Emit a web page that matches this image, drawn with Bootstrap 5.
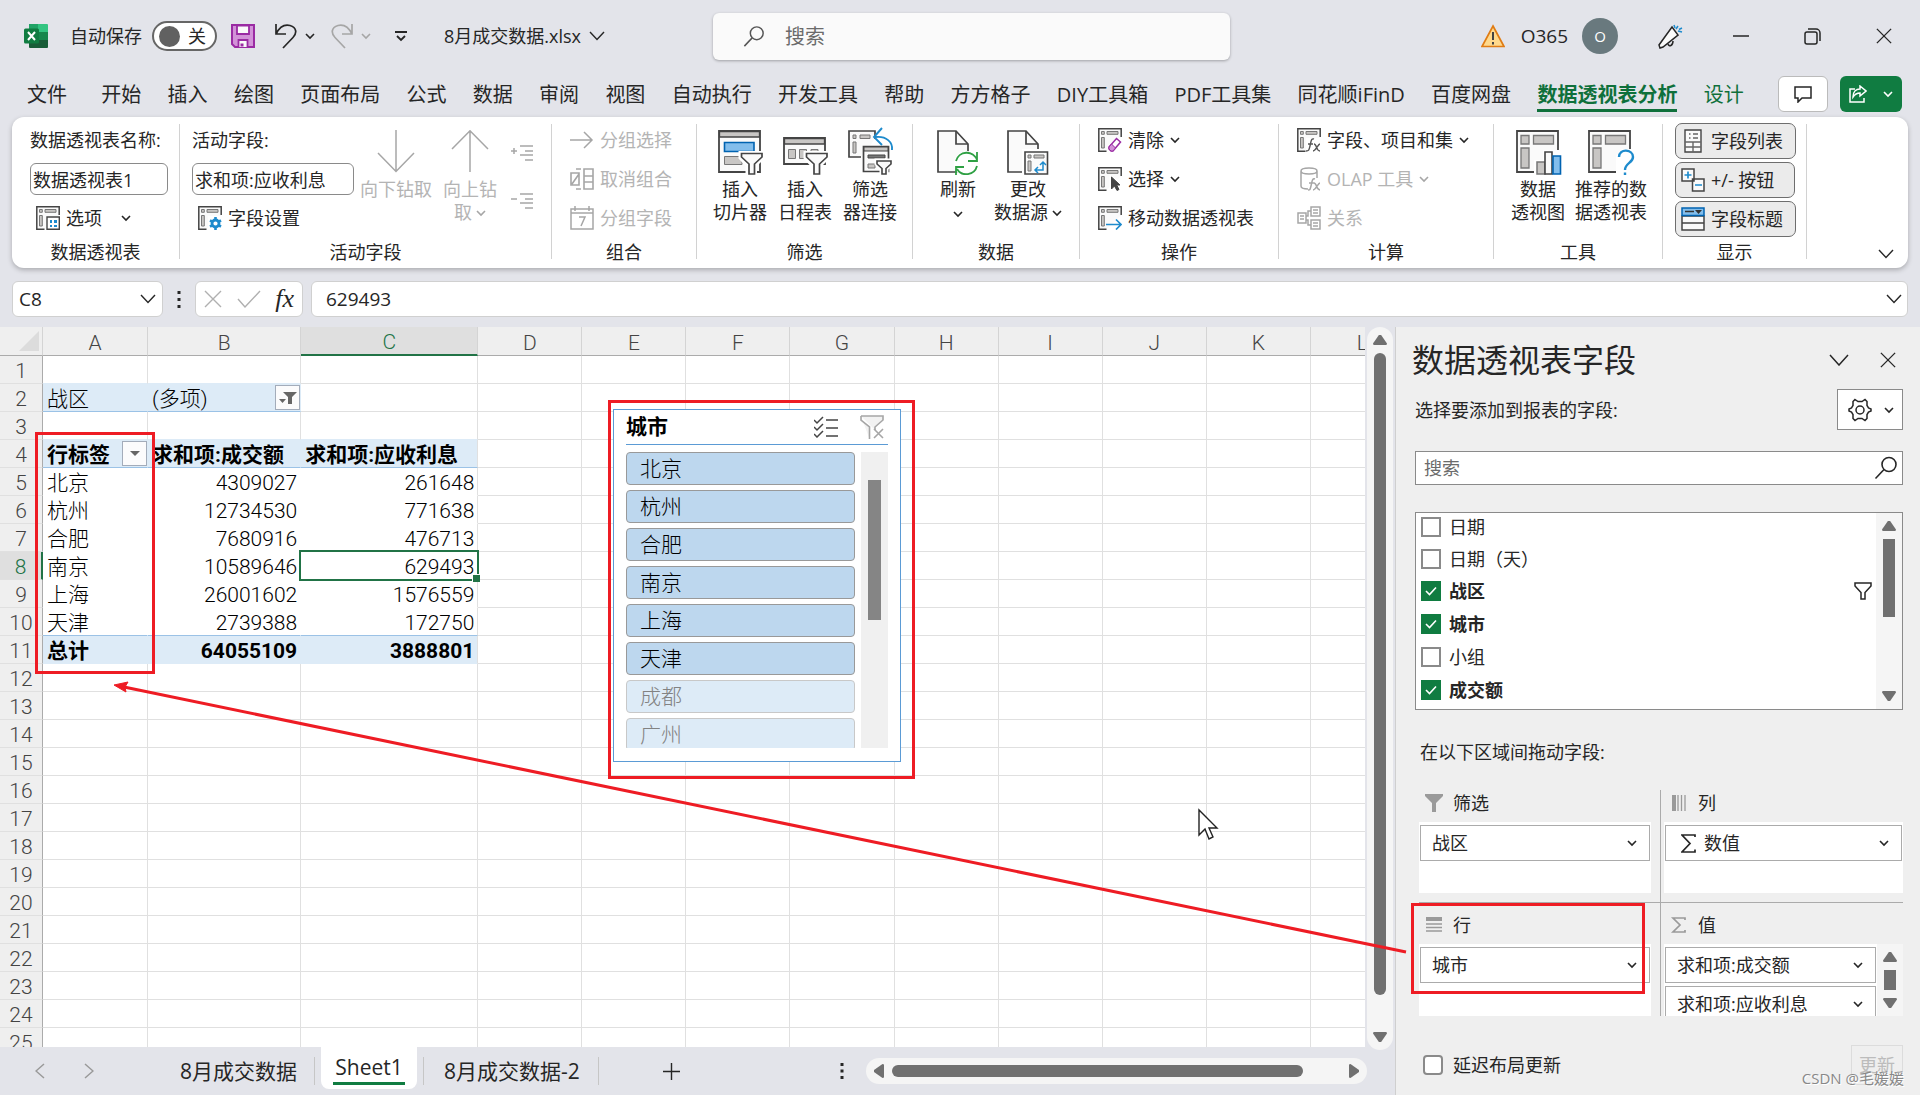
<!DOCTYPE html>
<html lang="zh-CN">
<head>
<meta charset="utf-8">
<meta name="viewport" content="width=device-width, initial-scale=1">
<title>8月成交数据.xlsx</title>
<link href="https://cdn.jsdelivr.net/npm/bootstrap@5.3.0/dist/css/bootstrap.min.css" rel="stylesheet">
<style>
:root{--chrome:#e3e4ea;--ink:#262626;--xl:#107c41;--line:#e0e0e0;--off:#b4b4b4;--red:#ee1c24}
body{font-family:"Open Sans","Noto Sans CJK SC",sans-serif;font-size:18px;line-height:24px;color:var(--ink);background:var(--chrome);height:100vh;overflow:hidden;position:relative}
button,input{font-family:inherit;color:inherit}
svg{display:block;flex:none;fill:none}
svg:not([stroke]){stroke:currentColor}
.bare{background:none;border:0;padding:0;line-height:24px;text-align:left;white-space:nowrap;font-size:18px}
.chev{width:10px;height:10px;stroke-width:1.6}
.chev-l{width:16px;height:10px;stroke-width:1.4}
/* title bar */
.titlebar{height:72px;padding:0 28px 0 24px}
.tb-left{flex:1 1 0}
.tb-right{flex:1 1 0}
.auto-switch{width:65px;height:30px;border:2px solid #666;border-radius:15px;background:#fff;padding:0 9px 0 5px}
.auto-switch i{width:21px;height:21px;border-radius:50%;background:#616161}
.searchbox{width:517px;height:47px;background:#fafafa;border-radius:6px;box-shadow:0 1px 3px #0000004d;padding:0 30px;margin:1px 0 0 27px}
.searchbox input{font-size:20px;background:none;border:0;outline:0;padding:0;flex:1}
.searchbox input::placeholder,.pane-search input::placeholder{color:#6b6b6b;opacity:1}
.avatar{width:36px;height:36px;border-radius:50%;background:#69797e;color:#fff;font-size:15px}
/* tabs */
.menu-tabs{height:45px;padding:0 18px 5px 27px;font-size:20px}
.menu-tabs a{color:var(--ink);text-decoration:none;line-height:28px;white-space:nowrap;border-bottom:3px solid transparent}
.menu-tabs a.on{color:#0f703b;font-weight:700;border-color:#0f703b}
.menu-tabs a.ctx{color:#0f703b}
.cmt{width:50px;height:36px;border:1px solid #bbb;border-radius:6px;background:#fff}
.share{width:62px;height:36px;border:0;border-radius:6px;background:var(--xl);color:#fff}
/* ribbon */
.ribbon{margin:0 12px;height:151px;background:#fff;border-radius:12px;box-shadow:0 2px 5px #00000040}
.grp{margin:7px 0 9px;border-right:1px solid #d2d2d2;display:flex;flex-direction:column;flex:none}
.grp-body{height:121px;display:flex}
.grp-name{line-height:14px;text-align:center;font-size:18px}
.rows3{display:flex;flex-direction:column;gap:7px}
.rows3>*{height:32px;display:flex;align-items:center;white-space:nowrap;gap:6px}
.rows3 input{border:1px solid #8a8a8a;border-radius:6px;padding:0 2px;font-size:18px;background:#fff}
.big{background:none;border:0;padding:6px 0 0;display:flex;flex-direction:column;align-items:center;line-height:23px;font-size:18px;gap:3px;white-space:nowrap}
.off{color:var(--off)}
.off svg{color:#a6a6a6}
.w1{width:168px}.w2{width:372px}.w3{width:145px}.w4{width:216px}.w5{width:167px}.w6{width:199px}.w7{width:215px}.w8{width:169px}.w9{width:144px}
.tog{border:1px solid #6e6e6e;border-radius:7px;background:#ebebeb;height:36px!important;min-width:120px;padding:0 12px 0 5px;font-size:18px}
.togs{gap:3px;margin-top:-1px}
/* formula bar */
.fbar{padding:13px 12px 10px;gap:8px}
.fbox{height:36px;background:#fff;border:1px solid #d0d0d0;border-radius:6px}
.fbox input{border:0;outline:0;background:none;padding:0;font-size:19px;min-width:0}
/* sheet */
.workspace{flex:1 1 0;min-height:0}
.sheet{flex:1 1 0;min-width:0;overflow:hidden;position:relative;background:#fff}
.cells{table-layout:fixed;border-collapse:separate;border-spacing:0;width:1415px;font-family:Roboto,"Noto Sans CJK SC",sans-serif;font-size:21px;line-height:24px;color:#000}
.cells th,.cells td{height:28px;padding:3px 3px 0 4px;border-right:1px solid var(--line);border-bottom:1px solid var(--line);white-space:nowrap;font-weight:300}
.cells th{background:#efefef;color:#444;text-align:center;padding:3px 0 0}
.cells thead th{border-bottom-color:#ababab;border-right-color:#d4d4d4}
.cells tbody th{border-right-color:#ababab;font-size:21px}
.cells thead th.sel{background:#dfdfdf;color:#217346;border-bottom:2px solid #217346}
.cells tbody th.sel{background:#dfdfdf;color:#217346;border-right:2px solid #217346}
.cells .num{text-align:right}
.cells .in{border-color:#fff}
.cells .band{background:#ddebf7;border-color:#ddebf7}
.cells .blue{border-bottom-color:#9bc2e6}
.cells .above{border-bottom-color:#ddebf7}
.cells .edge{border-right-color:var(--line)}
.cells .b{font-weight:700}
.active-cell{position:relative}
.active-cell::before{content:"";position:absolute;inset:-2px;border:2px solid #217346}
.active-cell::after{content:"";position:absolute;right:-3px;bottom:-3px;width:7px;height:7px;background:#217346;box-shadow:-1px -1px 0 #fff}
.dd{position:absolute;right:0;top:1px;width:25px;height:25px;border:1px solid #a3acba;background:#fbfbfc;padding:0;display:flex;align-items:center;justify-content:center}
.has-dd{position:relative}
.tri{position:absolute;left:19px;top:4px;width:20px;height:20px;background:#dcdcdc;clip-path:polygon(100% 0,100% 100%,0 100%)}
.slicer{position:absolute;left:613px;top:82px;width:288px;height:353px;background:#fff;border:1px solid #5b9bd5;padding:0 12px;font-family:Roboto,"Noto Sans CJK SC",sans-serif;color:#000}
.sl-head{height:35px;border-bottom:1px solid #5b9bd5;font-size:21px;font-weight:700}
.sl-body{height:296px;margin-top:7px;overflow:hidden;gap:6px}
.sl-items{flex:1;gap:5px;overflow:hidden}
.sl-items button{height:33px;flex:none;background:#bdd7ee;border:1px solid #999;border-radius:4px;font-size:21px;font-weight:300;text-align:left;padding:0 13px;line-height:30px}
.sl-items button.none{background:#ddebf7;border-color:#c8c8c8;color:#828282}
.sl-bar{width:27px;background:#f0f0f0;padding:28px 7px 0}
.sl-bar i{display:block;height:140px;background:#858585}
/* scrollbars */
.vbar{width:26px;background:#f5f5f5;border-radius:13px;margin:0 2px;color:#707070}
.thumb{background:#707070;display:block}
.up,.down{width:14px;height:10px;background:#707070;flex:none}
.up{clip-path:polygon(42% 0,58% 0,100% 85%,96% 100%,4% 100%,0 85%)}
.down{clip-path:polygon(42% 100%,58% 100%,100% 15%,96% 0,4% 0,0 15%)}
.left,.right{width:10px;height:14px;background:#707070;flex:none}
.left{clip-path:polygon(0 42%,0 58%,85% 100%,100% 96%,100% 4%,85% 0)}
.right{clip-path:polygon(100% 42%,100% 58%,15% 100%,0 96%,0 4%,15% 0)}
.sheets{height:48px;flex:none;font-size:21px}
.sheets a{color:var(--ink);text-decoration:none;white-space:nowrap}
.stab{background:#fff;border-radius:0 0 8px 8px;height:42px;padding:7px 12px 4px;width:96px;text-align:center}
.stab span{display:block;border-bottom:3px solid var(--xl);height:31px;line-height:26px}
.vsep{width:1px;height:28px;background:#c6c6c6}
.hbar{width:501px;height:26px;border-radius:13px;background:#f5f5f5;padding:0 8px}
/* pane */
.pane{width:525px;flex:none;background:#efefef;border-left:1px solid #cfcfcf;padding:10px 17px 0 19px;position:relative}
.pane h1{font-size:32px;line-height:46px;margin:0 0 0 -3px;font-weight:400}
.gear{width:66px;height:41px;border:1px solid #8a8a8a;background:#fff}
.pane-search{height:34px;border:1px solid #8a8a8a;background:#fff;margin-top:21px;padding:0 4px 0 8px}
.pane-search input{border:0;outline:0;background:none;flex:1;font-size:18px;padding:0}
.flist{height:198px;border:1px solid #8a8a8a;background:#fff;margin-top:27px}
.frows{margin-top:-3px}
.frow{height:33px;padding:0 4px 0 5px;gap:8px}
.box{appearance:none;width:20px;height:20px;border:2px solid #8a8a8a;background:#fff;margin:0;flex:none;border-radius:0}
.box:checked{border-color:var(--xl);background:var(--xl) url("data:image/svg+xml,%3Csvg xmlns='http://www.w3.org/2000/svg' viewBox='0 0 16 16'%3E%3Cpath d='M3 8l3.500 3.500L13 4.500' fill='none' stroke='%23fff' stroke-width='1.600'/%3E%3C/svg%3E") center/16px no-repeat}
.trk{width:26px;background:#f5f5f5}
.areas{display:grid;grid-template-columns:242px 1fr;margin:26px 0 0 4px}
.area{height:113px}
.area:nth-child(odd){border-right:1px solid #ababab;padding-right:9px}
.area:nth-child(even){padding-left:3px}
.area.top{border-bottom:1px solid #ababab}
.lab{height:32px;padding:0 0 6px 6px;gap:10px;color:var(--ink);line-height:26px}
.area.low .lab{padding-top:9px;height:41px}
.lab svg{color:#9a9a9a;width:18px;height:18px}
.well{height:71px;background:#fff;overflow:hidden}
.low .well{height:72px}
.pill{width:calc(100% - 2px);margin:3px 1px 0;height:36px;border:1px solid #ababab;background:#fff;padding:0 12px 0 11px;font-size:18px;display:flex;align-items:center;justify-content:space-between}
.upd{width:52px;height:40px;border:1px solid #dcdcdc;background:#efefef;color:#bcbcbc!important;font-size:18px}
.mark-csdn{position:absolute;right:16px;bottom:5px;font-size:15px;line-height:24px;color:#888;text-shadow:1px 1px 0 #fff;white-space:nowrap}
.notes{position:absolute;left:0;top:0;width:100%;height:100%;pointer-events:none}
</style>
<script src="https://cdn.jsdelivr.net/npm/bootstrap@5.3.0/dist/js/bootstrap.bundle.min.js"></script>
</head>
<body class="d-flex flex-column">
<svg width="0" height="0" class="position-absolute" aria-hidden="true">
<symbol id="chev" viewBox="0 0 10 10"><path d="M1 3l4 4 4-4"/></symbol>
<symbol id="chevl" viewBox="0 0 16 10"><path d="M1 1l7 7.500L15 1"/></symbol>
<symbol id="pv" viewBox="0 0 24 24"><path d="M8.500 23.200H.8V.8h22.400V9" fill="#fafafa" stroke="#444" stroke-width="1.500"/><path d="M3.500 3.500h2.800v2.800H3.500zM9 3.500h11v2.800H9zM3.500 9.500h2.800v10.500H3.500z" fill="#c8c6c4" stroke="#777" stroke-width="1"/></symbol>
<symbol id="pvl" viewBox="0 0 45 45"><path d="M1 1h41v41H1z" fill="#fafafa" stroke="#444" stroke-width="1.800"/><path d="M5 5.500h8v8.500H5zM17.500 5.500H37.500v8.500H17.500zM5 18h8v20H5z" fill="#c8c6c4" stroke="#777" stroke-width="1.300"/></symbol>
<symbol id="mag" viewBox="0 0 24 24"><circle cx="15" cy="8.500" r="7"/><path d="M10 13.500L1.500 22.500"/></symbol>
<symbol id="fun" viewBox="0 0 18 18"><path d="M1 1h16v3l-6 6.500V17H7v-6.500L1 4z"/></symbol>
<symbol id="x" viewBox="0 0 18 18"><path d="M1 1l16 16M17 1L1 17"/></symbol>
</svg>

<header class="titlebar d-flex align-items-center flex-shrink-0">
  <div class="tb-left d-flex align-items-center">
    <svg width="24" height="24" viewBox="0 0 24 24" stroke="none"><path d="M5 0h9v8H5z" fill="#21a366"/><path d="M14 0h9a1 1 0 011 1v7H14z" fill="#33c481"/><path d="M5 8h9v8H5z" fill="#107c41"/><path d="M14 8h10v8H14z" fill="#17864c"/><path d="M5 16h19v7a1 1 0 01-1 1H6a1 1 0 01-1-1z" fill="#185c37"/><rect y="4.500" width="15" height="15" rx="1.500" fill="#107c41"/><path d="M4 8l7 8M11 8l-7 8" stroke="#fff" stroke-width="2"/></svg>
    <span class="text-nowrap" style="margin:0 2px 0 22px">自动保存</span>
    <button class="auto-switch d-flex align-items-center justify-content-between ms-2" aria-label="自动保存 关"><i></i><span>关</span></button>
    <button class="bare" style="margin-left:14px" aria-label="保存"><svg width="24" height="24" viewBox="0 0 24 24"><path d="M1 1h22v22H4l-3-3z" fill="#d292d8" stroke="#9a2ba3" stroke-width="2"/><path d="M6 1.500h12v8.500H6zM7.500 23v-7h9v7" fill="#fafafa" stroke="#9a2ba3" stroke-width="1.800"/><path d="M9.500 22.500v-3h3v3z" fill="#9a2ba3" stroke="none"/></svg></button>
    <button class="bare d-flex align-items-center ms-3 gap-2 ps-1" aria-label="撤消"><svg width="22" height="25" viewBox="0 0 22 25" stroke-width="1.700"><path d="M1 0v10h10M1 10C4 4 9 0 15 1.500c7 2 7 8 3 12L8 24"/></svg><svg class="chev"><use href="#chev"/></svg></button>
    <button class="bare d-flex align-items-center ms-3 gap-2 off" aria-label="恢复"><svg width="22" height="25" viewBox="0 0 22 25" stroke-width="1.700"><path d="M21 0v10H11M21 10C18 4 13 0 7 1.500c-7 2-7 8-3 12L14 24"/></svg><svg class="chev"><use href="#chev"/></svg></button>
    <button class="bare ms-4" aria-label="自定义快速访问工具栏"><svg width="12" height="12" viewBox="0 0 12 12" stroke-width="1.800"><path d="M0 2h12M2 6l4 4 4-4"/></svg></button>
    <button class="bare d-flex align-items-center gap-1" style="margin-left:37px"><span>8月成交数据.xlsx</span><svg class="chev-l ms-1"><use href="#chevl"/></svg></button>
  </div>
  <label class="searchbox d-flex align-items-center"><svg width="22" height="23" style="color:#555" stroke-width="1.600"><use href="#mag"/></svg><input class="ms-3 ps-1" placeholder="搜索" aria-label="搜索"></label>
  <div class="tb-right d-flex align-items-center justify-content-end">
    <svg width="24" height="24" viewBox="0 0 24 24"><path d="M12 2L23 22.500H1z" fill="#ffd98c" stroke="#e07c14" stroke-width="1.700"/><path d="M12 8v8M12 18v2.500" stroke="#444" stroke-width="2"/></svg>
    <span class="ms-3" style="font-size:19px">O365</span>
    <span class="avatar d-flex align-items-center justify-content-center" style="margin-left:14px">O</span>
    <button class="bare ms-4" aria-label="即将推出" style="padding:0 14px 0 16px"><svg width="25" height="25" viewBox="0 0 25 25" stroke-width="1.500"><path d="M14 3l6 8L5 23l-3 1-1-3z" fill="#fafafa"/><path d="M10 20c1 3 5 2 5-3"/><path d="M16 1l1 3M20 2l-2 3M24 8l-4-1M24 4l-3 1.500" stroke="#1e8bcd"/></svg></button>
    <button class="bare" aria-label="最小化" style="margin-left:36px"><svg width="16" height="16" viewBox="0 0 16 16" stroke-width="1.500"><path d="M0 8h16"/></svg></button>
    <button class="bare" aria-label="还原" style="margin-left:55px"><svg width="17" height="17" viewBox="0 0 17 17" stroke-width="1.500"><rect x="1" y="4" width="12" height="12" rx="2"/><path d="M4 1h8a4 4 0 014 4v8"/></svg></button>
    <button class="bare" aria-label="关闭" style="margin-left:55px"><svg width="16" height="16" stroke-width="1.500"><use href="#x"/></svg></button>
  </div>
</header>

<nav class="menu-tabs d-flex align-items-end justify-content-between flex-shrink-0">
  <a href="#">文件</a><a href="#" class="ms-2">开始</a><a href="#">插入</a><a href="#">绘图</a><a href="#">页面布局</a><a href="#">公式</a><a href="#">数据</a><a href="#">审阅</a><a href="#">视图</a><a href="#">自动执行</a><a href="#">开发工具</a><a href="#">帮助</a><a href="#">方方格子</a><a href="#">DIY工具箱</a><a href="#">PDF工具集</a><a href="#">同花顺iFinD</a><a href="#">百度网盘</a><a href="#" class="on">数据透视表分析</a><a href="#" class="ctx">设计</a>
  <div class="d-flex ms-2" style="gap:12px">
  <button class="cmt d-flex align-items-center justify-content-center" aria-label="批注"><svg width="18" height="17" viewBox="0 0 18 17" stroke-width="1.500"><path d="M1 1h16v11H8l-4 4v-4H1z"/></svg></button>
  <button class="share d-flex align-items-center justify-content-center gap-3" aria-label="共享"><svg width="18" height="18" viewBox="0 0 18 18" stroke-width="1.500"><path d="M6 4H1v13h14v-4M11 1l6 5-6 5V8C8 8 6 9 4 12c0-5 3-8 7-8z"/></svg><svg class="chev"><use href="#chev"/></svg></button>
  </div>
</nav>

<section class="ribbon d-flex flex-shrink-0">
  <div class="grp w1"><div class="grp-body"><div class="rows3" style="padding-left:18px">
    <label for="pname">数据透视表名称:</label><input id="pname" value="数据透视表1" style="width:138px">
    <button class="bare" style="padding-left:6px"><svg width="24" height="24" viewBox="0 0 24 24"><use href="#pv"/><path d="M11 11h12.300v12.300H11z" fill="#fff" stroke="#444" stroke-width="1.400"/><path d="M14 14h2v3h-2zM14 19h2v2h-2zM18 14h3v3h-3zM18 19h3v2h-3z" fill="#1e8bcd" stroke="none"/></svg>选项<svg class="chev" style="margin-left:13px"><use href="#chev"/></svg></button>
  </div></div><div class="grp-name">数据透视表</div></div>

  <div class="grp w2"><div class="grp-body"><div class="rows3" style="padding-left:12px">
    <label for="pfield">活动字段:</label><input id="pfield" value="求和项:应收利息" style="width:162px">
    <button class="bare" style="padding-left:6px"><svg width="24" height="24" viewBox="0 0 24 24"><use href="#pv"/><path d="M10 10h14v14H10z" fill="#fff" stroke="none"/><circle cx="17.500" cy="17.500" r="3.500" stroke="#1e8bcd" stroke-width="2.800"/><path d="M17.500 11v3M17.500 21v3M12 14.300l2.500 1.500M20.500 19.200l2.500 1.500M12 20.700l2.500-1.500M20.500 15.800l2.500-1.500" stroke="#1e8bcd" stroke-width="2.600"/></svg>字段设置</button>
  </div>
  <button class="big off" style="margin-left:6px"><svg width="38" height="45" viewBox="0 0 38 45" stroke-width="1.500"><path d="M19 0v41M1 23l18 18.500L37 23"/></svg>向下钻取</button>
  <button class="big off" style="margin-left:11px"><svg width="38" height="45" viewBox="0 0 38 45" stroke-width="1.500"><path d="M19 42V1M1 19L19 .800 37 19"/></svg><span class="text-center">向上钻<br><span class="d-inline-flex align-items-center gap-1">取 <svg class="chev"><use href="#chev"/></svg></span></span></button>
  <div class="d-flex flex-column off" style="margin:21px 0 0 14px;gap:32px">
    <svg width="22" height="16" viewBox="0 0 22 16" stroke-width="1.500"><path d="M0 6h6M3 3v6M9 1h13M14 6h8M9 10h13M14 15h8"/></svg>
    <svg width="22" height="16" viewBox="0 0 22 16" stroke-width="1.500"><path d="M0 6h6M9 1h13M14 6h8M9 10h13M14 15h8"/></svg>
  </div></div><div class="grp-name">活动字段</div></div>

  <div class="grp w3"><div class="grp-body"><div class="rows3 off" style="padding-left:18px">
    <button class="bare off"><svg width="24" height="24" viewBox="0 0 24 24" stroke-width="1.500"><path d="M0 12h22M14 4l8 8-8 8"/></svg>分组选择</button>
    <button class="bare off"><svg width="24" height="24" viewBox="0 0 24 24" stroke-width="1.600"><path d="M1 6h8v12H1zM2 17L9 7M6 2h5M6 22h5M14 2h9v20h-9zM14 9h9M14 15h9"/></svg>取消组合</button>
    <button class="bare off"><svg width="24" height="24" viewBox="0 0 24 24" stroke-width="1.500"><path d="M1 3h22v20H1zM1 7h22M5 0v5M19 0v5M9 11h6l-4 9"/></svg>分组字段</button>
  </div></div><div class="grp-name">组合</div></div>

  <div class="grp w4"><div class="grp-body" style="padding-left:16px;gap:11px">
    <button class="big"><svg width="45" height="45" viewBox="0 0 45 45"><path d="M1 1h41v41H1z" fill="#fafafa" stroke="#444" stroke-width="1.800"/><path d="M1.500 1.500h40V7h-40z" fill="#c8c6c4" stroke="#444" stroke-width="1.300"/><path d="M6.500 12.500H36v9H6.500z" fill="#83beec" stroke="#0063b1" stroke-width="1.600"/><path d="M6.500 26.500H24v8H6.500z" fill="#c8c6c4" stroke="#777"/><path d="M23 23.500h21v4L36.500 35v9.500H30V35l-7-7.500z" fill="#fafafa" stroke="#fff" stroke-width="5"/><path d="M23.500 23.500h20.500v3.500L36.500 34v10H31V34l-7.500-7z" fill="#fafafa" stroke="#444" stroke-width="1.700"/></svg><span>插入<br>切片器</span></button>
    <button class="big"><svg width="45" height="45" viewBox="0 0 45 45"><path d="M1 8h41v26H1z" fill="#fafafa" stroke="#444" stroke-width="1.800"/><path d="M1.500 8.500h40V14h-40z" fill="#c8c6c4" stroke="#444" stroke-width="1.300"/><path d="M5.500 19.500h7v9h-7zM16.500 19.500h7v9h-7zM28 19.500h7v9h-7z" fill="#c8c6c4" stroke="#777"/><path d="M23 23.500h21v4L36.500 35v9.500H30V35l-7-7.500z" fill="#fafafa" stroke="#fff" stroke-width="5"/><path d="M23.500 23.500h20.500v3.500L36.500 34v10H31V34l-7.500-7z" fill="#fafafa" stroke="#444" stroke-width="1.700"/></svg><span>插入<br>日程表</span></button>
    <button class="big"><svg width="45" height="45" viewBox="0 0 45 45" overflow="visible"><path d="M13 27H1V1h26v8" fill="#fafafa" stroke="#444" stroke-width="1.700"/><path d="M5 5h3v3.500H5zM12 5h10v3.500H12zM5 12h3v11H5z" fill="#c8c6c4" stroke="#777"/><path d="M44 20c1-8-6-14-16-13M34-2l-8 9 8 8" stroke="#1e8bcd" stroke-width="1.900"/><path d="M15.500 16.500h25v25h-25z" fill="#fafafa" stroke="#444" stroke-width="1.700"/><path d="M16 17h24v4H16z" fill="#c8c6c4" stroke="#444"/><path d="M20 25h17v3H20z" fill="#777" stroke="#444"/><path d="M20 34h7v4h-7z" fill="#c8c6c4" stroke="#777"/><path d="M28 30h16v4l-5 5v6h-6v-6l-5-5z" fill="#fff" stroke="#fff" stroke-width="3"/><path d="M29 31h14v3l-5 4.500V44h-4v-5.500L29 34z" fill="#fafafa" stroke="#444" stroke-width="1.600"/></svg><span>筛选<br>器连接</span></button>
  </div><div class="grp-name">筛选</div></div>

  <div class="grp w5"><div class="grp-body" style="padding-left:24px;gap:15px">
    <button class="big"><svg width="42" height="45" viewBox="0 0 42 45"><path d="M1 1h18l12 13v28H1z" fill="#fafafa" stroke="#444" stroke-width="1.700"/><path d="M19 1v13h12" stroke="#444" stroke-width="1.700"/><circle cx="30" cy="34" r="13" fill="#fff" stroke="none"/><path d="M19 31a11 11 0 0121-1M40 22v9h-9M40 36a11 11 0 01-20 3M19 45v-8h8" stroke="#2ea043" stroke-width="1.800"/></svg><span class="d-flex flex-column align-items-center">刷新<svg class="chev mt-2"><use href="#chev"/></svg></span></button>
    <button class="big"><svg width="42" height="45" viewBox="0 0 42 45"><path d="M1 1h18l12 13v28H1z" fill="#fafafa" stroke="#444" stroke-width="1.700"/><path d="M19 1v13h12" stroke="#444" stroke-width="1.700"/><path d="M15 19h27v26H15z" fill="#fff" stroke="none"/><path d="M18 22h22.500v22H18z" fill="#fafafa" stroke="#444" stroke-width="1.600"/><path d="M21 25h3v3h-3zM27 25h10v3H27zM21 31h3v10h-3z" fill="#c8c6c4" stroke="#777"/><path d="M28 40h8v-8M33 35l3-3 3 3M31 37l-3 3 3 3" stroke="#1e8bcd" stroke-width="1.500"/></svg><span class="text-center">更改<br><span class="d-inline-flex align-items-center gap-1">数据源 <svg class="chev"><use href="#chev"/></svg></span></span></button>
  </div><div class="grp-name">数据</div></div>

  <div class="grp w6"><div class="grp-body"><div class="rows3" style="padding-left:18px">
    <button class="bare"><svg width="24" height="24" viewBox="0 0 24 24"><use href="#pv"/><path d="M10 18l8-8 6 5-8 9h-6z" fill="#fff" stroke="none"/><path d="M11 19l7.500-8.500 4 3.500-7.500 9h-2l-2-2z" fill="#fff" stroke="#9a2ba3" stroke-width="1.500"/><path d="M11 19l2.500-3 4 4-2.500 3h-2l-2-2z" fill="#d292d8" stroke="#9a2ba3"/></svg>清除<svg class="chev"><use href="#chev"/></svg></button>
    <button class="bare"><svg width="24" height="24" viewBox="0 0 24 24"><use href="#pv"/><path d="M12 8v15l4-4 3 5 3-1.500-3-5h5z" fill="#fff" stroke="#fff"/><path d="M13.500 10v12l3-3 2.500 4.500 2-1-2.300-4.500H22z" fill="#444" stroke="#444"/></svg>选择<svg class="chev"><use href="#chev"/></svg></button>
    <button class="bare"><svg width="24" height="24" viewBox="0 0 24 24"><use href="#pv"/><path d="M8 18.500h15M18 13.500l5 5-5 5" stroke="#1e8bcd" stroke-width="1.700"/></svg>移动数据透视表</button>
  </div></div><div class="grp-name">操作</div></div>

  <div class="grp w7"><div class="grp-body"><div class="rows3" style="padding-left:18px">
    <button class="bare"><svg width="24" height="24" viewBox="0 0 24 24"><use href="#pv"/><path d="M9 10h15v14H9z" fill="#fff" stroke="none"/><path d="M17 11c-3-1-3 3-4 7s-1 5-4 5M11 16h5M17 16c3 0 2 7 6 7M23 16c-2 0-4 7-7 7" stroke="#555" stroke-width="1.400"/></svg>字段、项目和集<svg class="chev"><use href="#chev"/></svg></button>
    <button class="bare off"><svg width="24" height="24" viewBox="0 0 24 24" stroke-width="1.500"><path d="M11 22c-4 0-7-1-7-3V4c0-4 16-4 16 0v7M4 4c0 4 16 4 16 0"/><path d="M18 12c-3-1-3 3-4 7s-1 4-3 4M12 16h5M17 16c3 0 2 7 6 7M23 16c-2 0-4 7-7 7"/></svg>OLAP 工具<svg class="chev"><use href="#chev"/></svg></button>
    <button class="bare off"><svg width="24" height="24" viewBox="0 0 24 24" stroke-width="1.500"><path d="M1 7h8v10H1zM14 1h9v9h-9zM14 14h9v9h-9zM3 10h4M3 13h4M16 4h5M16 7h5M16 17h5M16 20h5M9 10h2V5h3M9 14h2v5h3"/></svg>关系</button>
  </div></div><div class="grp-name">计算</div></div>

  <div class="grp w8"><div class="grp-body" style="padding-left:17px;gap:10px">
    <button class="big"><svg width="47" height="45" viewBox="0 0 47 45" style="margin-left:3px"><use href="#pvl" width="45" height="45"/><path d="M18 30h9V20h19v25H18z" fill="#fff" stroke="none"/><path d="M21 32h8v12h-8z" fill="#c8c6c4" stroke="#777" stroke-width="1.500"/><path d="M29 22h7v22h-7z" fill="#fafafa" stroke="#444" stroke-width="1.600"/><path d="M37 26h7.500v18H37z" fill="#83beec" stroke="#0063b1" stroke-width="1.600"/></svg><span>数据<br>透视图</span></button>
    <button class="big"><svg width="47" height="45" viewBox="0 0 47 45"><use href="#pvl" width="45" height="45"/><path d="M28 45V26l6-7h12v26z" fill="#fff" stroke="none"/><path d="M31 27c0-9 14-8 14 0 0 6-8 6-8 13M37 42.500v2.500" stroke="#1e8bcd" stroke-width="2.400"/></svg><span>推荐的数<br>据透视表</span></button>
  </div><div class="grp-name">工具</div></div>

  <div class="grp w9"><div class="grp-body"><div class="rows3 togs align-items-start" style="padding-left:12px">
    <button class="tog"><svg width="24" height="24" viewBox="0 0 24 24" stroke="#444"><path d="M4 1h16v22H4z" fill="#fafafa" stroke-width="1.400"/><path d="M4 13h16M4 18h16M12 13v10M8 5h1.500M12 5h5M8 9h1.500M12 9h5" stroke="#666" stroke-width="1.400"/></svg>字段列表</button>
    <button class="tog"><svg width="24" height="24" viewBox="0 0 24 24"><path d="M1 1h12v12H1zM11.500 11H23v12H11.500z" fill="#fafafa" stroke="#444" stroke-width="1.500"/><path d="M7 3.500v7M3.500 7h7M14 17h7" stroke="#1e8bcd" stroke-width="1.700"/></svg>+/- 按钮</button>
    <button class="tog"><svg width="24" height="24" viewBox="0 0 24 24"><path d="M1 9h22v14H1zM1 16h22" fill="#fafafa" stroke="#444" stroke-width="1.500"/><path d="M1 1h22v7.500H1z" fill="#83beec" stroke="#0063b1" stroke-width="1.500"/><path d="M4 4.500h9" stroke="#333" stroke-width="1.500"/><path d="M14 3h7l-3.500 4z" fill="#333" stroke="none"/></svg>字段标题</button>
  </div></div><div class="grp-name">显示</div></div>
  <button class="bare ms-auto align-self-end" style="margin:0 14px 9px" aria-label="折叠功能区"><svg class="chev-l"><use href="#chevl"/></svg></button>
</section>

<section class="fbar d-flex align-items-center flex-shrink-0">
  <label class="fbox d-flex align-items-center" style="width:151px;padding:0 6px"><input class="flex-grow-1" value="C8" aria-label="名称框"><svg class="chev-l"><use href="#chevl"/></svg></label>
  <svg width="16" height="18" viewBox="0 0 16 18" stroke-width="3"><path d="M8 1v3M8 8v3M8 15v3"/></svg>
  <div class="fbox d-flex align-items-center justify-content-between px-2" style="width:108px">
    <button class="bare" style="color:#b0b0b0" aria-label="取消"><svg width="18" height="18" stroke-width="1.400"><use href="#x"/></svg></button>
    <button class="bare" style="color:#b0b0b0" aria-label="输入"><svg width="24" height="18" viewBox="0 0 24 18" stroke-width="1.400"><path d="M1 9l7 8L23 1"/></svg></button>
    <button class="bare" style="font:italic 26px/30px 'Liberation Serif',serif" aria-label="插入函数">fx</button>
  </div>
  <label class="fbox d-flex align-items-center flex-grow-1" style="padding:0 5px 0 14px"><input class="flex-grow-1" value="629493" aria-label="编辑栏"><svg class="chev-l"><use href="#chevl"/></svg></label>
</section>

<main class="workspace d-flex">
  <div class="d-flex flex-column flex-grow-1" style="min-width:0">
    <div class="workspace d-flex">
      <div class="sheet">
        <table class="cells" id="cells"></table>
        <div class="slicer">
          <div class="sl-head d-flex align-items-center pe-1"><span class="me-auto">城市</span>
            <svg width="24" height="22" viewBox="0 0 24 22" stroke="#444" stroke-width="1.500"><path d="M0 4l3 3 6-6M0 11l3 3 6-6M0 18l3 3 6-6M12 4h12M12 12h12M12 20h12"/></svg>
            <svg style="margin-left:22px" width="24" height="24" viewBox="0 0 24 24" stroke="#a6a6a6" stroke-width="1.600"><path d="M1 1h22v4l-8 7v3M9.500 24V12L1 5V1" fill="#f2f2f2"/><path d="M14 14l9 9M23 14l-9 9"/></svg></div>
          <div class="sl-body d-flex"><div class="sl-items d-flex flex-column"><button>北京</button><button>杭州</button><button>合肥</button><button>南京</button><button>上海</button><button>天津</button><button class="none">成都</button><button class="none">广州</button></div><div class="sl-bar"><i></i></div></div>
        </div>
      </div>
      <div class="vbar d-flex flex-column align-items-center" style="padding:8px 0;margin-bottom:-3px"><i class="up"></i><i class="thumb" style="width:12px;height:642px;border-radius:6px;margin-top:8px"></i><i class="down mt-auto"></i></div>
    </div>
    <div class="sheets d-flex align-items-center">
      <svg width="10" height="16" viewBox="0 0 10 16" stroke="#999" stroke-width="1.500" style="margin-left:35px"><path d="M9 1L1 8l8 7"/></svg>
      <svg width="10" height="16" viewBox="0 0 10 16" stroke="#999" stroke-width="1.500" style="margin-left:39px"><path d="M1 1l8 7-8 7"/></svg>
      <a href="#" style="margin-left:86px">8月成交数据</a><i class="vsep" style="margin:0 6px 0 17px"></i>
      <a href="#" class="stab align-self-start"><span>Sheet1</span></a>
      <i class="vsep" style="margin:0 20px 0 6px"></i><a href="#">8月成交数据-2</a><i class="vsep" style="margin-left:18px"></i>
      <button class="bare" style="margin-left:64px" aria-label="新工作表"><svg width="17" height="17" viewBox="0 0 17 17" stroke-width="1.400"><path d="M8.500 0v17M0 8.500h17"/></svg></button>
      <svg class="ms-auto" width="4" height="16" viewBox="0 0 4 16" stroke-width="3"><path d="M2 0v3M2 6.500v3M2 13v3"/></svg>
      <div class="hbar d-flex align-items-center" style="margin:0 28px 0 22px"><i class="left"></i><i class="thumb" style="width:411px;height:12px;border-radius:6px;margin-left:8px"></i><i class="right ms-auto"></i></div>
    </div>
  </div>

  <aside class="pane">
    <div class="d-flex align-items-center"><h1 class="me-auto">数据透视表字段</h1>
      <svg width="20" height="12" viewBox="0 0 20 12" stroke-width="1.500"><path d="M1 1l9 10 9-10"/></svg>
      <svg width="16" height="16" stroke-width="1.500" style="margin:0 7px 0 31px"><use href="#x"/></svg></div>
    <div class="d-flex align-items-center justify-content-between" style="margin-top:6px"><span>选择要添加到报表的字段:</span>
      <button class="gear d-flex align-items-center justify-content-end px-2 gap-2" aria-label="工具"><svg width="24" height="24" viewBox="0 0 24 24" stroke-width="1.500"><circle cx="12" cy="12" r="4"/><path d="M7 1.500L10 3.500h4l3-2 2 2v4l1.500 2.500 2.500 1v2l-2.500 1L19 16.500v4l-2 2-3-2h-4l-3 2-2-2v-4L3.500 14 1 13v-2l2.500-1L5 7.500v-4z"/></svg><svg class="chev ms-1"><use href="#chev"/></svg></button></div>
    <label class="pane-search d-flex align-items-center"><input placeholder="搜索" aria-label="搜索字段"><svg width="24" height="24" stroke-width="1.600"><use href="#mag"/></svg></label>
    <div class="flist d-flex"><div class="frows flex-grow-1">
      <label class="frow d-flex align-items-center"><input type="checkbox" class="box">日期</label>
      <label class="frow d-flex align-items-center" style="height:31px"><input type="checkbox" class="box">日期（天）</label>
      <label class="frow d-flex align-items-center fw-bold"><input type="checkbox" class="box" checked>战区<svg class="ms-auto" width="18" height="18" stroke-width="1.500"><use href="#fun"/></svg></label>
      <label class="frow d-flex align-items-center fw-bold"><input type="checkbox" class="box" checked>城市</label>
      <label class="frow d-flex align-items-center"><input type="checkbox" class="box">小组</label>
      <label class="frow d-flex align-items-center fw-bold"><input type="checkbox" class="box" checked>成交额</label>
    </div><div class="trk d-flex flex-column align-items-center" style="padding:8px 0"><i class="up"></i><i class="thumb" style="width:12px;height:78px;margin-top:8px"></i><i class="down mt-auto"></i></div></div>
    <div style="margin:30px 0 0 5px">在以下区域间拖动字段:</div>
    <div class="areas">
      <div class="area top"><div class="lab d-flex align-items-center"><svg viewBox="0 0 18 18" stroke="none"><path d="M0 0h18v2l-7 7v9H7V9L0 2z" fill="#9a9a9a"/></svg>筛选</div><div class="well"><button class="pill">战区<svg class="chev"><use href="#chev"/></svg></button></div></div>
      <div class="area top"><div class="lab d-flex align-items-center"><svg viewBox="0 0 18 18"><path d="M4 1v16" stroke-width="4"/><path d="M8 1v16M11.500 1v16M15 1v16" stroke-width="1.300"/></svg>列</div><div class="well"><button class="pill"><span class="d-flex align-items-center gap-2 ps-1"><svg width="15" height="19" viewBox="0 0 15 19" stroke-width="1.700"><path d="M14 3V1H1l8 8.500L1 18h13v-2.500"/></svg>数值</span><svg class="chev"><use href="#chev"/></svg></button></div></div>
      <div class="area low"><div class="lab d-flex align-items-center"><svg viewBox="0 0 18 18"><path d="M1 3h16" stroke-width="4"/><path d="M1 8h16M1 11.500h16M1 15h16" stroke-width="1.300"/></svg>行</div><div class="well"><button class="pill">城市<svg class="chev"><use href="#chev"/></svg></button></div></div>
      <div class="area low"><div class="lab d-flex align-items-center"><svg viewBox="0 0 18 18" stroke-width="1.700"><path d="M15 4V2H3l7 7-7 7h12v-2"/></svg>值</div><div class="well d-flex"><div class="flex-grow-1"><button class="pill">求和项:成交额<svg class="chev"><use href="#chev"/></svg></button><button class="pill">求和项:应收利息<svg class="chev"><use href="#chev"/></svg></button></div><div class="trk d-flex flex-column align-items-center" style="padding:8px 0"><i class="up"></i><i class="thumb" style="width:12px;height:20px;margin-top:8px"></i><i class="down mt-auto"></i></div></div></div>
    </div>
    <div class="d-flex align-items-center justify-content-between" style="margin-top:29px"><label class="d-flex align-items-center" style="gap:10px;padding-left:8px"><input type="checkbox" class="box rounded-1">延迟布局更新</label><button class="upd" disabled>更新</button></div>
    <div class="mark-csdn">CSDN @毛媛媛</div>
  </aside>
</main>

<svg class="notes" aria-hidden="true">
  <g stroke="#ee1c24" stroke-width="3"><path d="M36.500 433.500h117v239h-117zM609.500 401.500h304v376h-304zM1412.500 904.500h231v88h-231z"/><path d="M1406 952L124 687"/></g>
  <path d="M114 685l14-3-3 5 1 5z" fill="#ee1c24" stroke="#ee1c24"/>
  <path d="M1199 810v25l6-6 4 10 4-2-4-9h8z" fill="#fff" stroke="#222" stroke-width="1.400"/>
</svg>

<script>
const cols='ABCDEFGHIJKL'.split(''),W=[105,153,177];
const data={2:['战区','(多项)'],4:['行标签','求和项:成交额','求和项:应收利息'],5:['北京','4309027','261648'],6:['杭州','12734530','771638'],7:['合肥','7680916','476713'],8:['南京','10589646','629493'],9:['上海','26001602','1576559'],10:['天津','2739388','172750'],11:['总计','64055109','3888801']};
const ddArrow='<button class="dd" aria-label="筛选"><svg width="10" height="6" viewBox="0 0 10 6"><path d="M0 0h10L5 5z" fill="#666" stroke="none"/></svg></button>';
const ddFilter='<button class="dd" aria-label="筛选"><svg width="18" height="14" viewBox="0 0 18 14"><path d="M4 1h14l-5 5v7H9V6z" fill="#666" stroke="none"/><path d="M0 8h7l-3.500 4z" fill="#666" stroke="none"/></svg></button>';
let h='<colgroup><col style="width:43px">'+cols.map((c,i)=>`<col style="width:${W[i]||104}px">`).join('')+'</colgroup><thead><tr><th class="has-dd"><i class="tri"></i></th>'+cols.map(c=>`<th${c==='C'?' class="sel"':''}>${c}</th>`).join('')+'</tr></thead><tbody>';
for(let r=1;r<=25;r++){
  h+=`<tr><th${r===8?' class="sel"':''}>${r}</th>`;
  cols.forEach((c,i)=>{
    const k=[];let t=(data[r]||[])[i]||'';
    const inPv=(r===2&&i<2)||(r>=4&&r<=11&&i<3);
    if(inPv)k.push(r===2||r===4||r===11?'band':'in');
    if((r===2&&i<2)||((r===4||r===10)&&i<3))k.push('blue');
    if((r===1&&i<2)||(r===3&&i<3))k.push('above');
    if(inPv&&i===2)k.push('edge');
    if(r===4||r===11)k.push('b');
    if(/^\d/.test(t))k.push('num');
    if(r===8&&i===2)k.push('active-cell');
    if((r===2&&i===1)||(r===4&&i===0)){k.push('has-dd');t+=r===2?ddFilter:ddArrow}
    h+=`<td class="${k.join(' ')}">${t}</td>`;
  });
  h+='</tr>';
}
document.getElementById('cells').innerHTML=h+'</tbody>';
</script>
</body>
</html>
